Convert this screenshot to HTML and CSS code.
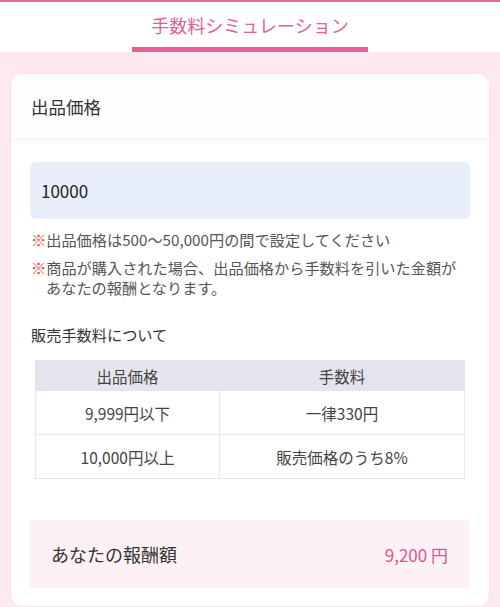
FILE: index.html
```html
<!DOCTYPE html>
<html lang="ja">
<head>
<meta charset="utf-8">
<link rel="stylesheet" href="styles.css">
</head>
<body>
<header class="topbar">
  <div class="tab">手数料シミュレーション</div>
</header>
<main class="page">
  <section class="card">
    <div class="card-head">出品価格</div>
    <div class="card-body">
      <div class="input">10000</div>
      <p class="note note-first"><span class="mark">※</span>出品価格は500〜50,000円の間で設定してください</p>
      <p class="note"><span class="mark">※</span>商品が購入された場合、出品価格から手数料を引いた金額があなたの報酬となります。</p>
      <h2 class="sub">販売手数料について</h2>
      <table class="fees">
        <thead>
          <tr><th>出品価格</th><th>手数料</th></tr>
        </thead>
        <tbody>
          <tr><td>9,999円以下</td><td>一律330円</td></tr>
          <tr><td>10,000円以上</td><td>販売価格のうち8%</td></tr>
        </tbody>
      </table>
      <div class="result">
        <span class="result-label">あなたの報酬額</span>
        <span class="result-value">9,200 円</span>
      </div>
    </div>
  </section>
</main>
</body>
</html>
```

FILE: styles.css
```css
* { box-sizing: border-box; }
html, body { margin: 0; padding: 0; }
body {
  font-family: "Noto Sans CJK JP", "Noto Sans", sans-serif;
  background: #fde9ef;
  color: #333;
  width: 500px;
  height: 607px;
  overflow: hidden;
}
.topbar {
  background: #fff;
  border-top: 2px solid #e9659a;
  height: 52px;
  display: flex;
  justify-content: center;
}
.tab {
  width: 236px;
  height: 50px;
  border-bottom: 5px solid #ea5f93;
  color: #e0609a;
  font-size: 18px;
  text-align: center;
  line-height: 46px;
}
.page {
  padding: 21px 10px 0;
}
.card {
  background: #fff;
  border-radius: 12px;
  border: 1px solid #fbe0e8;
  height: 534px;
}
.card-head {
  height: 66px;
  padding-left: 20px;
  font-size: 17.5px;
  line-height: 66px;
  color: #333;
  background: #fefefe;
  border-bottom: 1px solid #f1f1f3;
  border-radius: 12px 12px 0 0;
}
.card-body {
  padding: 22px 19px 18px;
}
.input {
  height: 57px;
  background: #e8eefa;
  border-radius: 6px;
  padding-left: 11px;
  font-size: 17px;
  line-height: 57px;
  color: #222;
}
.note {
  margin: 0;
  font-size: 15.2px;
  line-height: 20px;
  color: #555;
  padding-left: 16px;
  text-indent: -15px;
}
.note-first { margin-top: 10px; margin-bottom: 8px; }
.mark { color: #e0443e; }
.sub {
  margin: 27px 0 0;
  padding-left: 1px;
  font-size: 15.2px;
  font-weight: normal;
  line-height: 20px;
  color: #333;
}
.fees {
  margin: 16px 5px 0;
  width: 430px;
  border-collapse: collapse;
  font-size: 15.5px;
  color: #444;
}
.fees th {
  background: #e4e4ec;
  font-weight: normal;
  height: 30px;
  text-align: center;
  border: 1px solid #e4e4ec;
  width: 184px;
}
.fees th + th { width: auto; }
.fees td {
  height: 44px;
  text-align: center;
  border: 1px solid #e8e8ea;
}
.result {
  margin-top: 41px;
  height: 68px;
  background: #fdf1f5;
  display: flex;
  justify-content: space-between;
  align-items: center;
  padding: 0 22px 0 21px;
}
.result-label {
  font-size: 18px;
  color: #333;
}
.result-value {
  font-size: 17px;
  color: #e0558c;
}
```
